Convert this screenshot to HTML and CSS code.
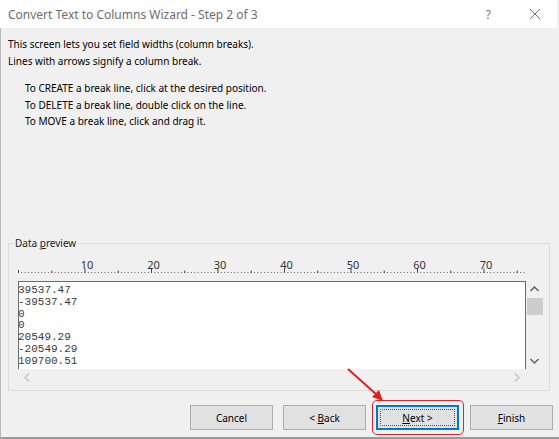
FILE: index.html
```html
<!DOCTYPE html>
<html lang="en">
<head>
  <meta charset="UTF-8" />
  <title>Convert Text to Columns Wizard - Step 2 of 3</title>
  <link rel="stylesheet" href="styles.css">
</head>
<body>
  <div class="window">
    <div class="titlebar">
      <span class="title">Convert Text to Columns Wizard - Step 2 of 3</span>
      <span class="help">?</span>
      <svg class="close" width="12" height="12" viewBox="0 0 12 12">
        <path d="M1 1 L11 11 M11 1 L1 11" stroke="#6d6d6d" stroke-width="1" fill="none" />
      </svg>
    </div>

    <div class="content">
      <div class="intro">
        <p>This screen lets you set field widths (column breaks).</p>
        <p>Lines with arrows signify a column break.</p>
      </div>
      <div class="howto">
        <p>To CREATE a break line, click at the desired position.</p>
        <p>To DELETE a break line, double click on the line.</p>
        <p>To MOVE a break line, click and drag it.</p>
      </div>

      <fieldset class="group">
        <legend>Data <u>p</u>review</legend>

        <svg class="ruler" width="508" height="31" viewBox="0 0 508 31">
          <line x1="0" y1="22.5" x2="508" y2="22.5" stroke="#666" stroke-width="1" stroke-dasharray="1 2.325" />
          <g stroke="#444" stroke-width="1">
            <line x1="0.5" y1="20" x2="0.5" y2="23" />
            <line x1="33.75" y1="20.5" x2="33.75" y2="23" />
            <line x1="67" y1="18.5" x2="67" y2="23" />
            <line x1="100.25" y1="20.5" x2="100.25" y2="23" />
            <line x1="133.5" y1="18.5" x2="133.5" y2="23" />
            <line x1="166.75" y1="20.5" x2="166.75" y2="23" />
            <line x1="200" y1="18.5" x2="200" y2="23" />
            <line x1="233.25" y1="20.5" x2="233.25" y2="23" />
            <line x1="266.5" y1="18.5" x2="266.5" y2="23" />
            <line x1="299.75" y1="20.5" x2="299.75" y2="23" />
            <line x1="333" y1="18.5" x2="333" y2="23" />
            <line x1="366.25" y1="20.5" x2="366.25" y2="23" />
            <line x1="399.5" y1="18.5" x2="399.5" y2="23" />
            <line x1="432.75" y1="20.5" x2="432.75" y2="23" />
            <line x1="466" y1="18.5" x2="466" y2="23" />
            <line x1="499.25" y1="20.5" x2="499.25" y2="23" />
          </g>
          <g class="ruler-nums" text-anchor="middle">
            <text x="69" y="19">10</text>
            <text x="135.5" y="19">20</text>
            <text x="202" y="19">30</text>
            <text x="268.5" y="19">40</text>
            <text x="335" y="19">50</text>
            <text x="401.5" y="19">60</text>
            <text x="468" y="19">70</text>
          </g>
        </svg>

        <div class="preview-row">
          <div class="preview">
            <div>39537.47</div>
            <div>-39537.47</div>
            <div>0</div>
            <div>0</div>
            <div>20549.29</div>
            <div>-20549.29</div>
            <div>109700.51</div>
          </div>
          <div class="vscroll">
            <svg width="17" height="17" viewBox="0 0 17 17">
              <path d="M4.5 10 L8.5 6 L12.5 10" stroke="#606060" stroke-width="1.5" fill="none" />
            </svg>
            <div class="thumb"></div>
            <div class="vspace"></div>
            <svg width="17" height="17" viewBox="0 0 17 17">
              <path d="M4.5 7 L8.5 11 L12.5 7" stroke="#606060" stroke-width="1.5" fill="none" />
            </svg>
          </div>
        </div>

        <div class="hscroll">
          <svg width="17" height="17" viewBox="0 0 17 17">
            <path d="M10 4.5 L6 8.5 L10 12.5" stroke="#c4c4c4" stroke-width="1.5" fill="none" />
          </svg>
          <svg width="17" height="17" viewBox="0 0 17 17">
            <path d="M7 4.5 L11 8.5 L7 12.5" stroke="#c4c4c4" stroke-width="1.5" fill="none" />
          </svg>
        </div>
      </fieldset>

      <div class="buttons">
        <button>Cancel</button>
        <button>&lt; <u>B</u>ack</button>
        <div class="next-wrap">
          <svg class="callout-arrow" width="44" height="40" viewBox="0 0 44 40">
            <line x1="2" y1="2" x2="31" y2="28" stroke="#e0201e" stroke-width="2" />
            <path d="M37 34 L26 30 L33 23 Z" fill="#e0201e" />
          </svg>
          <span class="callout-box"></span>
          <button class="default"><span><u>N</u>ext &gt;</span></button>
        </div>
        <button class="finish"><u>F</u>inish</button>
      </div>
    </div>
  </div>
</body>
</html>
```

FILE: styles.css
```css
* {
  box-sizing: border-box;
  margin: 0;
  padding: 0;
}

body {
  width: 559px;
  height: 439px;
  font-family: 'Noto Sans', 'Open Sans', sans-serif;
  font-size: 10px;
  color: #000;
  background: #f0f0f0;
  overflow: hidden;
}

.window {
  display: flex;
  flex-direction: column;
  width: 559px;
  height: 439px;
}

.titlebar {
  display: flex;
  align-items: center;
  height: 28px;
  padding-left: 8px;
  background: #fff;
  margin-right: 2px;
}

.title {
  flex: 1;
  font-size: 12px;
  color: #6d6d6d;
}

.help {
  font-size: 12px;
  color: #777;
  margin-right: 38px;
}

.close {
  margin-right: 16px;
}

.content {
  flex: 1;
  display: flex;
  flex-direction: column;
  padding-top: 8px;
  border-left: 1px solid #b9b9b9;
  border-bottom: 2px solid #9a9a9a;
}

.intro {
  padding-left: 7px;
  line-height: 17px;
}

.howto {
  padding-left: 24px;
  margin-top: 10px;
  line-height: 16.5px;
}

.group {
  margin: auto 9px 0 7px;
  padding: 0 5px 3px 9px;
  border: 1px solid #dcdcdc;
  border-radius: 0;
}

.group legend {
  margin-left: -5px;
  padding: 0 2px;
  color: #222;
  line-height: 15px;
}

.ruler {
  display: block;
  margin-top: -1px;
}

.ruler-nums {
  font-family: 'Noto Sans', sans-serif;
  font-size: 11px;
  fill: #333;
}

.preview-row {
  display: flex;
}

.preview {
  width: 508px;
  height: 88px;
  background: #fff;
  border: 1px solid #6a6a6a;
  border-bottom: none;
  padding-top: 3px;
  font-family: 'Liberation Mono', 'Courier New', monospace;
  font-size: 11px;
  line-height: 11.8px;
  color: #3a3a3a;
  text-indent: -1px;
  overflow: hidden;
}

.vscroll {
  width: 17px;
  height: 88px;
  display: flex;
  flex-direction: column;
}

.vscroll svg {
  display: block;
}

.thumb {
  height: 17px;
  background: #cdcdcd;
  margin-left: 1px;
}

.vspace {
  flex: 1;
}

.hscroll {
  display: flex;
  justify-content: space-between;
  width: 508px;
  height: 18px;
  padding: 0 1px;
}

.hscroll svg {
  display: block;
}

.buttons {
  display: flex;
  justify-content: flex-end;
  gap: 10px;
  margin: 14px 6px 7px 0;
}

button {
  width: 83px;
  height: 25px;
  font-family: 'Noto Sans', 'Open Sans', sans-serif;
  font-size: 10px;
  color: #000;
  background: #e1e1e1;
  border: 1px solid #adadad;
}

.next-wrap {
  position: relative;
  display: flex;
}

button.default {
  border: 1px solid #0078d7;
  box-shadow: inset 0 0 0 1px #0078d7;
  padding: 3px;
}

button.default span {
  display: flex;
  align-items: center;
  justify-content: center;
  height: 100%;
  border: 1px dotted #555;
}

.finish {
  margin-left: 1px;
}

.callout-box {
  position: absolute;
  left: -4px;
  top: -5px;
  right: -5px;
  bottom: -5px;
  border: 1.5px solid #d7262b;
  border-radius: 5px;
  pointer-events: none;
}

.callout-arrow {
  position: absolute;
  left: -30px;
  top: -38px;
}
```
